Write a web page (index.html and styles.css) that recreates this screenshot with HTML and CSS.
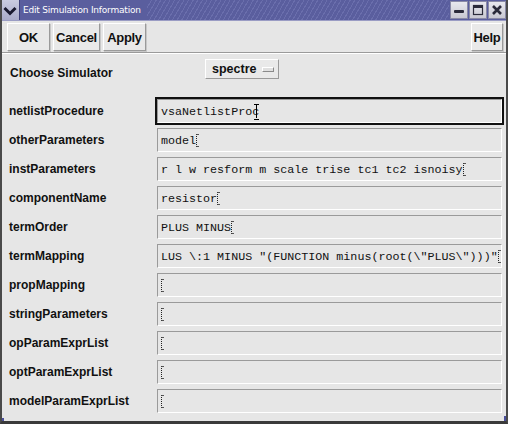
FILE: index.html
```html
<!DOCTYPE html>
<html>
<head>
<meta charset="utf-8">
<link rel="stylesheet" href="styles.css">
</head>
<body>
<div class="window">
  <div class="titlebar">
    <div class="menu-btn">
      <svg width="14" height="10" viewBox="0 0 14 10"><path d="M1.5 2 L7 7.5 L12.5 2" fill="none" stroke="#1a1a30" stroke-width="3"/></svg>
    </div>
    <div class="title">Edit Simulation Information</div>
    <div class="stripes"></div>
    <div class="wbtns">
      <div class="wbtn"><svg width="12" height="12" viewBox="0 0 12 12"><rect x="1" y="6" width="10" height="3" rx="1" fill="#2a2a3a"/></svg></div>
      <div class="wbtn"><svg width="12" height="12" viewBox="0 0 12 12"><rect x="1.5" y="1.5" width="9" height="9" fill="none" stroke="#2a2a3a" stroke-width="1.2"/><rect x="1.5" y="1.5" width="9" height="2.5" fill="#2a2a3a"/></svg></div>
      <div class="wbtn"><svg width="12" height="12" viewBox="0 0 12 12"><path d="M2 2 L10 10 M10 2 L2 10" stroke="#2a2a3a" stroke-width="2.6"/></svg></div>
    </div>
  </div>
  <div class="client">
    <div class="toolbar">
      <button class="btn b-ok">OK</button>
      <button class="btn b-cancel">Cancel</button>
      <button class="btn b-apply">Apply</button>
      <span class="spacer"></span>
      <button class="btn b-help">Help</button>
    </div>
    <div class="sim-row">
      <span class="label">Choose Simulator</span>
      <button class="cycle">spectre <span class="ind"></span></button>
    </div>
    <div class="form">
      <div class="row"><span class="label">netlistProcedure</span><div class="ring focus"><div class="field">vsaNetlistPro<span class="ibeam">c</span></div></div></div>
      <div class="row"><span class="label">otherParameters</span><div class="ring"><div class="field">model<span class="cur"></span></div></div></div>
      <div class="row"><span class="label">instParameters</span><div class="ring"><div class="field">r l w resform m scale trise tc1 tc2 isnoisy<span class="cur"></span></div></div></div>
      <div class="row"><span class="label">componentName</span><div class="ring"><div class="field">resistor<span class="cur"></span></div></div></div>
      <div class="row"><span class="label">termOrder</span><div class="ring"><div class="field">PLUS MINUS<span class="cur"></span></div></div></div>
      <div class="row"><span class="label">termMapping</span><div class="ring"><div class="field">LUS \:1 MINUS "(FUNCTION minus(root(\"PLUS\")))"<span class="cur"></span></div></div></div>
      <div class="row"><span class="label">propMapping</span><div class="ring"><div class="field"><span class="cur"></span></div></div></div>
      <div class="row"><span class="label">stringParameters</span><div class="ring"><div class="field"><span class="cur"></span></div></div></div>
      <div class="row"><span class="label">opParamExprList</span><div class="ring"><div class="field"><span class="cur"></span></div></div></div>
      <div class="row"><span class="label">optParamExprList</span><div class="ring"><div class="field"><span class="cur"></span></div></div></div>
      <div class="row"><span class="label">modelParamExprList</span><div class="ring"><div class="field"><span class="cur"></span></div></div></div>
    </div>
  </div>
  <div class="corner-l"></div>
  <div class="corner-r"></div>
</div>
</body>
</html>
```
FILE: styles.css
```css
* { box-sizing: border-box; }
html, body { margin: 0; padding: 0; }
body { width: 508px; height: 424px; overflow: hidden; background: #e6e6e6; }
.window {
  position: relative;
  width: 508px; height: 424px;
  background: #e6e6e6;
  border-left: 2px solid #4a4a4a;
  border-right: 2px solid #4a4a4a;
  border-bottom: 3px solid #3a3a3a;
  display: flex; flex-direction: column;
  font-family: "Liberation Sans", Arial, sans-serif;
  overflow: hidden;
}
.titlebar {
  height: 21px; flex: none;
  background: #5a5e9e;
  display: flex; align-items: stretch;
  border-bottom: 1px solid #9a9cc4;
  margin-left: -2px; margin-right: -2px;
}
.menu-btn {
  width: 20px; display: flex; align-items: center; justify-content: center;
  background: linear-gradient(#c9cbe0, #a9abc9);
  border-right: 1px solid #3c3f78;
}
.menu-btn svg { margin-top: 1px; }
.title {
  color: #ffffff; font-size: 9px; padding-left: 3px;
  display: flex; align-items: center; white-space: nowrap;
  font-family: "DejaVu Sans", sans-serif; letter-spacing: -0.2px;
}
.stripes {
  flex: 1; margin-left: 6px;
  background: repeating-linear-gradient(-60deg, #5a5e9e 0 3px, #6a6eac 3px 4px);
}
.wbtns { display: flex; width: 59px; background: #5a5e9e; gap: 1px; padding: 1px 2px 1px 1px; }
.wbtn {
  flex: 1; background: linear-gradient(#e8e8ee, #c8c8d2);
  display: flex; align-items: center; justify-content: center;
  border: 1px solid #8a8aa6;
}
.client { flex: 1; display: flex; flex-direction: column; }
.toolbar {
  height: 32px; flex: none;
  display: flex; align-items: center; gap: 3px;
  padding: 0 3px 0 5px;
  border-bottom: 1px solid #9a9a9a;
  box-shadow: 0 1px 0 #ffffff;
}
.btn {
  height: 28px; margin-top: 1px;
  font-family: "Liberation Sans", Arial, sans-serif;
  font-weight: bold; font-size: 13px; color: #111;
  background: #e9e9e9;
  border: 1px solid; border-color: #ffffff #9a9a9a #9a9a9a #ffffff;
  box-shadow: 1px 1px 0 #c8c8c8;
  padding: 0; letter-spacing: -0.3px;
}
.b-ok { width: 43px; }
.b-cancel { width: 47px; }
.b-apply { width: 43px; }
.b-help { width: 32px; }
.spacer { flex: 1; }
.label {
  font-weight: bold; font-size: 12px; color: #111; letter-spacing: 0;
}
.sim-row {
  height: 43px; flex: none;
  display: flex; align-items: flex-start;
  padding-left: 8px;
}
.sim-row .label { margin-top: 13px; width: 195px; }
.cycle {
  margin-top: 6px;
  width: 74px; height: 20px;
  font-family: "Liberation Sans", Arial, sans-serif;
  font-weight: bold; font-size: 12.5px; color: #111;
  background: #e9e9e9;
  border: 1px solid; border-color: #ffffff #9a9a9a #9a9a9a #ffffff;
  display: flex; align-items: center; padding: 0 0 0 6px; gap: 6px;
}
.ind {
  width: 12px; height: 5px; background: #e0e0e0;
  border: 1px solid; border-color: #ffffff #8a8a8a #8a8a8a #ffffff;
}
.form { display: flex; flex-direction: column; padding-top: 1px; }
.row { height: 29px; display: flex; align-items: flex-start; padding-left: 7px; }
.row .label { width: 146px; margin-top: 7px; }
.ring { width: 349px; height: 28px; padding: 2px; border: 0; }
.ring.focus { border: 2px solid #111; padding: 0; }
.field {
  width: 100%; height: 24px;
  border: 1px solid; border-color: #9a9a9a #ffffff #ffffff #9a9a9a;
  background: #e6e6e6;
  font-family: "Liberation Mono", "Courier New", monospace;
  font-size: 11.7px; color: #111;
  padding: 5px 0 0 3px;
  white-space: nowrap; overflow: hidden;
  display: flex; align-items: flex-start;
}
.ibeam { position: relative; }
.ibeam::after {
  content: ""; position: absolute; left: 4px; top: -1px;
  width: 1px; height: 14px; background: #000;
}
.ibeam::before {
  content: ""; position: absolute; left: 2px; top: -1px;
  width: 5px; height: 14px;
  border-top: 1px solid #000; border-bottom: 1px solid #000;
}
.cur {
  display: inline-block; width: 3px; height: 13px;
  border-left: 1px dotted #222;
  border-top: 1px solid #555; border-bottom: 1px solid #555;
}
.corner-l {
  position: absolute; left: -2px; bottom: -3px;
  width: 20px; height: 6px;
  border-left: 4px solid #4a4f9a; border-bottom: 3px solid #4a4f9a;
}
.corner-r {
  position: absolute; right: -2px; bottom: -3px;
  width: 20px; height: 8px;
  border-right: 4px solid #4a4f9a; border-bottom: 3px solid #4a4f9a;
}
```
